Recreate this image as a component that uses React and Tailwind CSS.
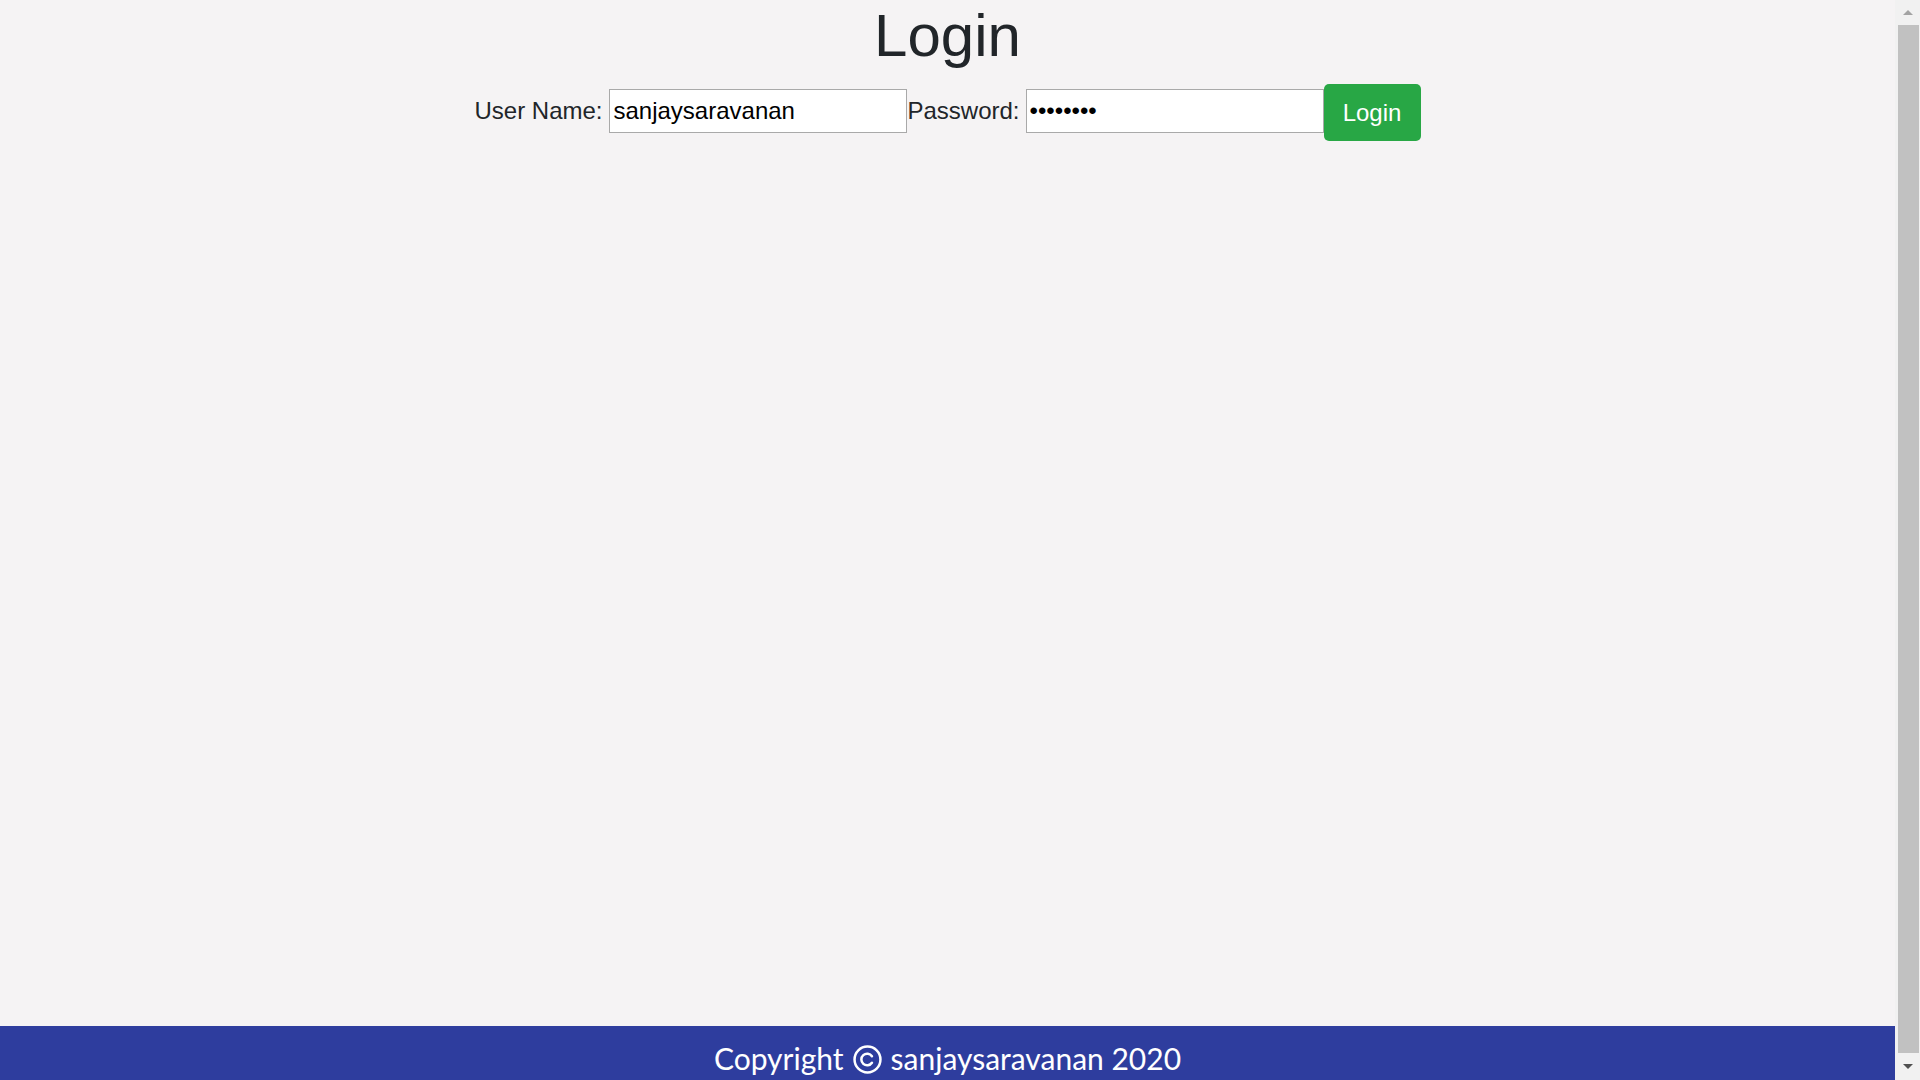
import React, { useState } from 'react';

const ScrollBar = () => (
  <div className="w-[25px] shrink-0 h-full bg-[#f1f1f1] flex flex-col items-center">
    <div className="h-[25px] w-full flex items-center justify-center">
      <div className="w-0 h-0 border-l-[5px] border-r-[5px] border-b-[5px] border-l-transparent border-r-transparent border-b-[#a3a3a3]" />
    </div>
    <div className="flex-1 w-[21px] ml-[2px] bg-[#c1c1c1]" />
    <div className="h-[27px] w-full flex items-center justify-center">
      <div className="w-0 h-0 border-l-[5px] border-r-[5px] border-t-[5px] border-l-transparent border-r-transparent border-t-[#505050]" />
    </div>
  </div>
);

// circled c, thin strokes like the original
const CopyrightIcon = () => (
  <svg viewBox="0 0 30 30" className="w-[29px] h-[29px] mx-[9px] mt-[9px]" fill="none" stroke="currentColor">
    <circle cx="15" cy="15" r="13.4" strokeWidth="2.6" />
    <path d="M19.6 11.6 A6 6 0 1 0 19.6 18.4" strokeWidth="2.6" strokeLinecap="round" />
  </svg>
);

const App = () => {
  const [userName, setUserName] = useState('sanjaysaravanan');
  const [password, setPassword] = useState('password');

  return (
    <div className="h-screen w-full flex overflow-hidden">
      <div className="flex-1 flex flex-col overflow-hidden bg-[#f5f3f4]">
        {/* Login form */}
        <div className="h-[1026px] shrink-0 flex flex-col items-center font-['Liberation_Sans',Arial,sans-serif] text-[#212529]">
          <h1 className="text-[60px] leading-[72px] font-normal m-0">Login</h1>
          <form className="mt-[8px] flex items-center" onSubmit={(e) => e.preventDefault()}>
            <label htmlFor="userName" className="text-[24px] mr-[7px]">
              User Name:
            </label>
            <input
              id="userName"
              type="text"
              value={userName}
              onChange={(e) => setUserName(e.target.value)}
              className="w-[298px] h-[44px] border border-[#a9a9a9] bg-white px-[3px] text-[24px] text-black outline-none"
            />
            <label htmlFor="password" className="text-[24px] mr-[6px]">
              Password:
            </label>
            <input
              id="password"
              type="password"
              value={password}
              onChange={(e) => setPassword(e.target.value)}
              className="w-[298px] h-[44px] border border-[#a9a9a9] bg-white px-[3px] text-[24px] text-black outline-none"
            />
            <button
              type="submit"
              className="w-[97px] h-[57px] rounded-[5px] bg-[#28a745] text-white text-[24px] mt-[4px]"
            >
              Login
            </button>
          </form>
        </div>

        {/* Footer */}
        <footer className="shrink-0 h-[82px] bg-[#2e3d9e] text-white font-['Lato',sans-serif] text-[30px] leading-[45px] pt-[10px] flex justify-center items-start">
          <span>Copyright</span>
          <CopyrightIcon />
          <span>sanjaysaravanan 2020</span>
        </footer>
      </div>
      <ScrollBar />
    </div>
  );
};

export default App;
